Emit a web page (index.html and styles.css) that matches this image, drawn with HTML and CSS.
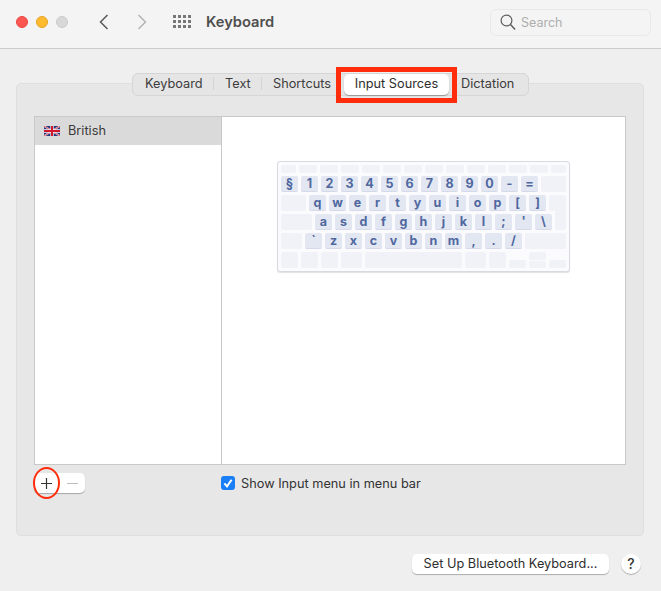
FILE: index.html
```html
<!DOCTYPE html>
<html lang="en">
<head>
<meta charset="utf-8">
<title>Keyboard</title>
<link rel="stylesheet" href="styles.css">
</head>
<body>
<div class="window">
  <header class="titlebar">
    <div class="lights"><span class="light red"></span><span class="light amber"></span><span class="light grey"></span></div>
    <div class="nav">
      <svg class="chev" width="10" height="16" viewBox="0 0 10 16"><path d="M8.5 1 1.5 8l7 7" fill="none" stroke="#5a5a5a" stroke-width="1.5"/></svg>
      <svg class="chev" width="10" height="16" viewBox="0 0 10 16"><path d="M1.5 1 8.5 8l-7 7" fill="none" stroke="#b4b4b4" stroke-width="1.5"/></svg>
    </div>
    <svg class="apps" width="18" height="14" viewBox="0 0 18 14" fill="#777">
      <rect x="0" y="0" width="3" height="3"/><rect x="5" y="0" width="3" height="3"/><rect x="10" y="0" width="3" height="3"/><rect x="15" y="0" width="3" height="3"/>
      <rect x="0" y="5" width="3" height="3"/><rect x="5" y="5" width="3" height="3"/><rect x="10" y="5" width="3" height="3"/><rect x="15" y="5" width="3" height="3"/>
      <rect x="0" y="10" width="3" height="3"/><rect x="5" y="10" width="3" height="3"/><rect x="10" y="10" width="3" height="3"/><rect x="15" y="10" width="3" height="3"/>
    </svg>
    <h1 class="title">Keyboard</h1>
    <div class="search">
      <svg width="16" height="17" viewBox="0 0 16 17"><circle cx="6.5" cy="6.5" r="5.4" fill="none" stroke="#5f5f5f" stroke-width="1.2"/><path d="m10.5 10.5 4.6 5" fill="none" stroke="#5f5f5f" stroke-width="1.5"/></svg>
      <span>Search</span>
    </div>
  </header>

  <main class="content">
    <section class="panel">
      <nav class="tabs">
        <span class="tab tab-keyboard">Keyboard</span>
        <span class="tab tab-text">Text</span>
        <span class="tab tab-shortcuts">Shortcuts</span>
        <span class="tab tab-active">Input Sources<span class="mark-rect"></span></span>
        <span class="tab tab-dictation">Dictation</span>
      </nav>

      <div class="split">
        <div class="sources">
          <div class="source selected">
            <svg class="flag" width="16" height="10" viewBox="0 0 48 30">
              <rect width="48" height="30" fill="#26357f"/>
              <path d="M0 0 48 30M48 0 0 30" stroke="#f4f4f4" stroke-width="5"/>
              <path d="M0 0 48 30M48 0 0 30" stroke="#d02a3a" stroke-width="2.5"/>
              <path d="M24 0v30M0 15h48" stroke="#f4f4f4" stroke-width="10"/>
              <path d="M24 0v30M0 15h48" stroke="#d3152b" stroke-width="6"/>
            </svg>
            <span>British</span>
          </div>
        </div>
        <div class="preview">
          <div class="kbd">
            <div class="row row-fn">
              <i class="k w15"></i><i class="k w18"></i><i class="k w18"></i><i class="k w18"></i><i class="k w18"></i><i class="k w18"></i><i class="k w18"></i><i class="k w18"></i><i class="k w18"></i><i class="k w18"></i><i class="k w18"></i><i class="k w18"></i><i class="k w18"></i><i class="k w15"></i>
            </div>
            <div class="row">
              <b class="c">§</b><b class="c">1</b><b class="c">2</b><b class="c">3</b><b class="c">4</b><b class="c">5</b><b class="c">6</b><b class="c">7</b><b class="c">8</b><b class="c">9</b><b class="c">0</b><b class="c">-</b><b class="c">=</b><i class="k w25"></i>
            </div>
            <div class="row">
              <i class="k w25"></i><b class="c">q</b><b class="c">w</b><b class="c">e</b><b class="c">r</b><b class="c">t</b><b class="c">y</b><b class="c">u</b><b class="c">i</b><b class="c">o</b><b class="c">p</b><b class="c">[</b><b class="c">]</b><i class="k w17 ret-top"></i>
            </div>
            <div class="row">
              <i class="k w31"></i><b class="c">a</b><b class="c">s</b><b class="c">d</b><b class="c">f</b><b class="c">g</b><b class="c">h</b><b class="c">j</b><b class="c">k</b><b class="c">l</b><b class="c">;</b><b class="c">'</b><b class="c">\</b><i class="k w11 ret-tail"></i>
            </div>
            <div class="row">
              <i class="k w21"></i><b class="c">`</b><b class="c">z</b><b class="c">x</b><b class="c">c</b><b class="c">v</b><b class="c">b</b><b class="c">n</b><b class="c">m</b><b class="c">,</b><b class="c">.</b><b class="c">/</b><i class="k w41"></i>
            </div>
            <div class="row">
              <i class="k w17"></i><i class="k w17"></i><i class="k w17"></i><i class="k w21"></i><i class="k w97"></i><i class="k w21"></i><i class="k w17"></i>
              <i class="k w17 arrow-side"></i>
              <span class="arrow-stack"><i class="k arrow-half"></i><i class="k arrow-half"></i></span>
              <i class="k w17 arrow-side"></i>
            </div>
          </div>
        </div>
      </div>

      <div class="panel-controls">
        <div class="stepper">
          <span class="step step-add">
            <svg width="11" height="11" viewBox="0 0 11 11"><path d="M5.5 0v11M0 5.5h11" stroke="#333" stroke-width="1.2"/></svg>
            <span class="mark-oval"></span>
          </span>
          <span class="step step-remove">
            <svg width="11" height="1" viewBox="0 0 11 1"><path d="M0 .5h11" stroke="#bdbdbd" stroke-width="1"/></svg>
          </span>
        </div>
        <label class="show-menu">
          <span class="check"><svg width="14" height="14" viewBox="0 0 14 14"><path d="m3.4 7.3 2.6 3 4.6-6.6" fill="none" stroke="#fff" stroke-width="2"/></svg></span>
          <span>Show Input menu in menu bar</span>
        </label>
      </div>
    </section>

    <footer class="actions">
      <span class="btn">Set Up Bluetooth Keyboard...</span>
      <span class="help">?</span>
    </footer>
  </main>
</div>
</body>
</html>
```
FILE: styles.css
```css
* { box-sizing: border-box; }
html, body { margin: 0; height: 100%; }
body {
  background: #efefef;
  font-family: Inter, "Liberation Sans", sans-serif;
  font-size: 12.75px;
  color: #333;
  overflow: hidden;
}
.window { width: 661px; height: 591px; }

.titlebar {
  height: 49px;
  background: #f4f4f4;
  border-bottom: 1px solid #cbcbcb;
  display: flex;
  align-items: center;
  padding: 0 10px 4px 16px;
}
.lights { display: flex; gap: 8px; }
.light { width: 12px; height: 12px; border-radius: 50%; }
.red { background: #fd5754; border: 1px solid #e9473f; }
.amber { background: #febb2e; border: 1px solid #e5a427; }
.grey { background: #d8d8d8; border: 1px solid #cbcbcb; }
.nav { display: flex; gap: 28px; margin-left: 31px; }
.chev { display: block; }
.apps { margin-left: 26px; }
.title {
  margin: 0 0 0 15px;
  font-size: 14.7px;
  font-weight: 600;
  color: #4e4e4e;
}
.search {
  margin-left: auto;
  width: 161px;
  height: 27px;
  border: 1px solid #e9e9e9;
  border-radius: 6px;
  background: #f4f4f4;
  display: flex;
  align-items: center;
  gap: 5px;
  padding-left: 9px;
  color: #aeaeae;
  font-size: 12.5px;
}

.content { padding: 34px 17px 0 16px; }
.panel {
  position: relative;
  height: 453px;
  background: #e7e7e7;
  border: 1px solid #dedede;
  border-radius: 5px;
  padding: 32px 17px 0 17px;
}
.tabs {
  position: absolute;
  top: -11px;
  left: 115px;
  width: 397px;
  height: 23px;
  background: #e5e5e5;
  border: 1px solid #d6d6d6;
  border-radius: 6px;
  display: flex;
  align-items: center;
}
.tab { display: block; color: #3c3c3c; white-space: nowrap; line-height: 13px; margin-bottom: 2px; }
.tab-keyboard { width: 81px; padding-left: 12px; border-right: 1px solid #d4d4d4; }
.tab-text { width: 48px; padding-left: 11px; border-right: 1px solid #d4d4d4; }
.tab-shortcuts { width: 82px; padding-left: 11px; }
.tab-active {
  position: relative;
  width: 105px;
  height: 21px;
  margin-bottom: 0;
  background: #fff;
  border-radius: 5px;
  box-shadow: 0 1px 1px rgba(0,0,0,.3);
  text-align: center;
  line-height: 19px;
  color: #2e2e2e;
}
.tab-dictation { padding-left: 12px; }
.mark-rect {
  position: absolute;
  left: -8px;
  top: -7px;
  width: 121px;
  height: 36px;
  border: 5px solid #ff2d0b;
}

.split {
  display: flex;
  width: 592px;
  height: 349px;
  border: 1px solid #c9c9c9;
  background: #fff;
}
.sources { width: 187px; border-right: 1px solid #c9c9c9; }
.source {
  height: 28px;
  background: #dadada;
  display: flex;
  align-items: center;
  gap: 8px;
  padding: 0 0 2px 9px;
  color: #3a3a3a;
}
.flag { display: block; margin-top: 2px; }
.preview { flex: 1; display: flex; justify-content: center; align-items: flex-start; padding-top: 44px; }

.kbd {
  width: 293px;
  height: 111px;
  background: #fbfbfd;
  border: 1px solid #d7dae0;
  border-radius: 3px;
  box-shadow: 0 1px 1px rgba(0,0,0,.12);
  padding: 3px;
  display: flex;
  flex-direction: column;
  gap: 3px;
}
.row { display: flex; gap: 3px; height: 16px; }
.row-fn { height: 8px; }
.k { display: block; height: 100%; background: #f0f2f8; border-radius: 2px; flex: none; position: relative; }
.w11 { width: 11px; }
.w15 { width: 15px; }
.w17 { width: 17px; }
.w18 { width: 18px; }
.w21 { width: 21px; }
.w25 { width: 25px; }
.w31 { width: 31px; }
.w41 { width: 41px; }
.w97 { width: 97px; }
.ret-top { border-bottom-right-radius: 0; }
.ret-tail::before {
  content: "";
  position: absolute;
  left: 0;
  right: 0;
  top: -4px;
  height: 5px;
  background: #f0f2f8;
}
.c {
  display: block;
  flex: none;
  width: 17px;
  height: 16px;
  background: #e3e7f1;
  border-bottom: 1px solid #d5daea;
  border-radius: 2px;
  color: #4f679f;
  font-size: 12.5px;
  font-weight: 700;
  line-height: 15px;
  text-align: center;
}
.arrow-side { height: 8px; margin-top: 8px; }
.arrow-stack { display: flex; flex-direction: column; gap: 1px; width: 17px; flex: none; }
.arrow-half { height: 7.5px; }

.panel-controls { display: flex; align-items: center; margin-top: 8px; }
.stepper {
  width: 51px;
  height: 20px;
  display: flex;
  background: #fff;
  border-radius: 5px;
  box-shadow: 0 1px 1px rgba(0,0,0,.28);
}
.step { position: relative; display: flex; align-items: center; justify-content: center; }
.step-add { width: 25px; }
.step-remove { width: 26px; }
.mark-oval {
  position: absolute;
  left: -1px;
  top: -6px;
  width: 27px;
  height: 32px;
  border: 2px solid #ff2d0b;
  border-radius: 50%;
}
.show-menu { display: flex; align-items: center; gap: 6px; margin-left: 136px; color: #333; }
.check { width: 14px; height: 14px; border-radius: 3px; background: #1a7ff7; display: block; }
.check svg { display: block; }

.actions {
  display: flex;
  justify-content: flex-end;
  align-items: center;
  gap: 12px;
  margin-top: 18px;
  padding-right: 3px;
}
.btn {
  width: 197px;
  height: 20px;
  background: #fff;
  border-radius: 5px;
  box-shadow: 0 1px 1px rgba(0,0,0,.28);
  text-align: center;
  line-height: 19px;
  color: #2e2e2e;
}
.help {
  width: 20px;
  height: 20px;
  border-radius: 50%;
  background: #fff;
  box-shadow: 0 1px 1px rgba(0,0,0,.28);
  text-align: center;
  line-height: 20px;
  font-size: 14px;
  font-weight: 500;
  color: #333;
}
```
